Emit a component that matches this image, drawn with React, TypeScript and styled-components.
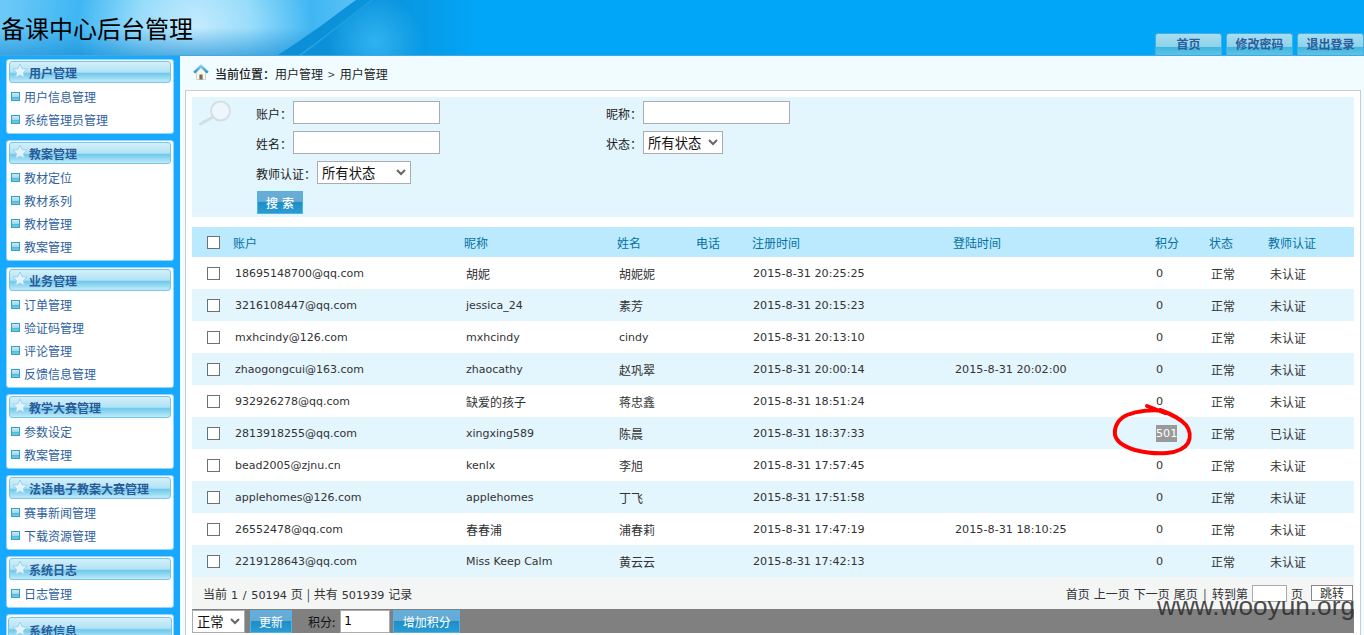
import React from "react";
import styled, { createGlobalStyle } from "styled-components";

const CJK = `"Noto Sans CJK SC", "Liberation Sans", sans-serif`;
const LATIN = `"DejaVu Sans", "Noto Sans CJK SC", sans-serif`;

const chevron =
  "data:image/svg+xml;utf8," +
  encodeURIComponent(
    '<svg xmlns="http://www.w3.org/2000/svg" width="10" height="7"><path d="M1 1l4 4 4-4" fill="none" stroke="#666" stroke-width="2"/></svg>'
  );

const Global = createGlobalStyle`
  html, body { margin: 0; padding: 0; height: 635px; overflow: hidden; background: #fff; }
  body { font-family: ${CJK}; font-size: 12px; color: #333; }
  * { box-sizing: border-box; }
`;

const Page = styled.div`
  position: relative;
  width: 1364px;
  height: 635px;
  overflow: hidden;
  display: flex;
  flex-direction: column;
`;

const Header = styled.header`
  position: relative;
  flex: 0 0 56px;
  height: 56px;
  background: #02a6f8;
  border-bottom: 1px solid #46a6de;
  display: flex;
  justify-content: space-between;
  align-items: flex-end;
  overflow: hidden;
`;

const HeaderArt = styled.svg`
  position: absolute;
  left: 0;
  top: 0;
`;

const Title = styled.h1`
  position: relative;
  margin: 0 0 9px 1px;
  font-size: 24px;
  line-height: 36px;
  font-weight: 400;
  color: #000;
  font-family: ${CJK};
`;

const Tabs = styled.nav`
  position: relative;
  display: flex;
  gap: 4px;
`;

const Tab = styled.a`
  width: 67px;
  height: 22px;
  display: flex;
  justify-content: center;
  align-items: center;
  padding-bottom: 3px;
  font-size: 12px;
  font-weight: 700;
  color: #2c5c9c;
  border-radius: 3px 3px 0 0;
  border: 1px solid #3fb0e6;
  border-bottom: 0;
  background: linear-gradient(#a9deef 0, #8ed2ea 60%, #3fb6de 62%, #5cc4e6 100%);
`;

const Body = styled.div`
  flex: 1;
  display: flex;
  min-height: 0;
`;

const Sidebar = styled.aside`
  flex: 0 0 180px;
  background: #17a8ff;
  padding: 3px 6px 0;
  display: flex;
  flex-direction: column;
  gap: 6px;
  overflow: hidden;
`;

const MenuTitle = styled.div`
  height: 22px;
  display: flex;
  align-items: center;
  gap: 1px;
  padding-left: 2px;
  border: 1px solid #78c6e8;
  border-radius: 3px;
  font-weight: 700;
  font-size: 12px;
  color: #2a5a98;
  background: linear-gradient(#d4effa 0, #b2e3f6 50%, #6ec9ec 58%, #a3def4 85%, #c4eaf8 100%);
  margin-bottom: 2px;
`;

const MenuGroup = styled.section`
  flex: 0 0 auto;
  background: #fff;
  border: 1px solid #8fd6fb;
  border-radius: 3px;
  padding: 1px 2px 2px;

  &:last-child {
    padding: 2px 1px 2px;
  }
  &:last-child ${MenuTitle} {
    height: 26px;
    padding-left: 3px;
    background: linear-gradient(#d4effa 0, #b2e3f6 42%, #6ec9ec 50%, #a3def4 72%, #c4eaf8 85%);
  }
`;

const Star = styled.svg`
  flex: 0 0 16px;
  margin-top: -3px;
`;

const MenuItem = styled.a`
  height: 23px;
  display: flex;
  align-items: center;
  gap: 4px;
  padding-left: 2px;
  font-size: 12px;
  color: #2f5f9e;
`;

const Bullet = styled.i`
  width: 9px;
  height: 9px;
  border: 1px solid #2ba3cd;
  background: linear-gradient(#cfe9f3 0, #a6d8e8 50%, #4fb6d8 55%, #7cc9e2 100%);
`;

const Main = styled.main`
  flex: 1;
  background: #f0fcff;
  padding: 0 3px 0 5px;
  min-width: 0;
`;

const Breadcrumb = styled.div`
  height: 34px;
  display: flex;
  align-items: center;
  padding: 1px 0 0 8px;
  color: #222;
  font-size: 12px;
`;

const HomeIcon = styled.svg`
  margin-right: 6px;
  margin-top: -3px;
`;

const Here = styled.span`
  font-weight: 500;
`;

const Gt = styled.span`
  margin: 0 5px;
  color: #444;
`;

const Panel = styled.div`
  background: #fff;
  border: 1px solid #ccc;
  border-bottom: 0;
  padding: 6px 6px 0;
  height: 545px;
`;

const SearchBox = styled.form`
  position: relative;
  height: 120px;
  background: #e3f5fd;
  padding: 4px 0 0 64px;
  display: flex;
  flex-direction: column;
  gap: 7px;
`;

const Magnifier = styled.svg`
  position: absolute;
  left: 6px;
  top: 3px;
`;

const SearchRow = styled.div`
  display: grid;
  grid-template-columns: 350px 1fr;
  height: 23px;
`;

const Field = styled.label`
  display: flex;
  align-items: center;
  gap: 1px;
  color: #222;
  font-size: 12px;
`;

const FieldName = styled.span`
  padding-top: 2px;
`;

const TextInput = styled.input<{ $w: number }>`
  width: ${(p) => p.$w}px;
  height: 23px;
  border: 1px solid #a9adb2;
  background: #fff;
  padding: 0 3px;
  font-size: 12px;
  font-family: ${LATIN};
  outline: 0;
`;

const Select = styled.select<{ $w: number }>`
  width: ${(p) => p.$w}px;
  height: 23px;
  padding: 0 0 0 4px;
  border: 1px solid #a9adb2;
  border-radius: 0;
  appearance: none;
  background: #fff url("${chevron}") no-repeat right 4px center;
  font-size: 13.33px;
  font-family: ${CJK};
  color: #111;
`;

const BlueButton = styled.button<{ $w: number }>`
  width: ${(p) => p.$w}px;
  height: 23px;
  padding: 0;
  border: 1px solid #4cb4ea;
  color: #fff;
  font-size: 12px;
  font-family: ${CJK};
  background: linear-gradient(#69add6 0, #65abd5 45%, #1e8fc6 50%, #2b9bd0 100%);
`;

const SearchButton = styled(BlueButton)`
  margin-left: 1px;
  letter-spacing: 4px;
  padding-left: 4px;
  font-weight: 500;
`;

const Table = styled.table`
  width: 1162px;
  margin-top: 10px;
  table-layout: fixed;
  border-collapse: collapse;
`;

const HeadRow = styled.tr`
  height: 30px;
  background: #bbeaff;
`;

const Th = styled.th`
  padding: 0;
  text-align: left;
  font-weight: 400;
  font-size: 12px;
  color: #06709f;
`;

const Row = styled.tr<{ $alt: boolean }>`
  height: 32px;
  background: ${(p) => (p.$alt ? "#e3f5fd" : "#fff")};
`;

const Td = styled.td<{ $latin?: number; $wide?: boolean }>`
  padding: 1px 0 0 ${(p) => (p.$wide ? "2px" : "1px")};
  font-size: ${(p) => p.$latin ?? 12}px;
  font-family: ${(p) => (p.$latin ? LATIN : CJK)};
  color: #333;
  white-space: nowrap;
`;

const CheckCell = styled.td`
  padding: 0 0 0 15px;
`;

const HeadCheckCell = styled.th`
  padding: 0 0 0 15px;
`;

const Check = styled.i`
  display: block;
  width: 13px;
  height: 13px;
  border: 1px solid #707070;
  background: #fff;
`;

const Marked = styled.span`
  background: #999;
  color: #fff;
  padding: 2px 0;
`;

const Pager = styled.div`
  height: 32px;
  width: 1162px;
  background: #f4f5f5;
  display: flex;
  justify-content: space-between;
  align-items: center;
  padding: 0 1px 0 11px;
  color: #333;
`;

const PagerLeft = styled.span`
  word-spacing: 1.2px;
`;

const PagerRight = styled.div`
  display: flex;
  align-items: center;
  gap: 4px;
`;

const PagerBar = styled.span`
  margin: 0 1.5px;
`;

const Num = styled.span`
  font-family: ${LATIN};
  font-size: 11.2px;
`;

const JumpInput = styled.input`
  width: 35px;
  height: 17px;
  border: 1px solid #aaa;
  background: #fff;
`;

const JumpButton = styled.button`
  width: 42px;
  height: 16px;
  margin-left: 4px;
  padding: 0;
  border: 1px solid #888;
  background: #fff;
  font-size: 12px;
  line-height: 12px;
  font-family: ${CJK};
  color: #333;
`;

const ActionBar = styled.div`
  width: 1162px;
  height: 24px;
  background: #808080;
  display: flex;
  align-items: center;
  color: #111;
`;

const BarLabel = styled.span`
  margin: 0 5px 0 16px;
`;

const BarGap = styled.span<{ $w: number }>`
  width: ${(p) => p.$w}px;
`;

const Watermark = styled.div`
  position: absolute;
  left: 1157px;
  top: 591px;
  font-family: "Liberation Sans", sans-serif;
  font-size: 26.2px;
  line-height: 30px;
  color: rgba(45, 45, 45, 0.85);
  white-space: nowrap;
`;

const RedMark = styled.svg`
  position: absolute;
  left: 1105px;
  top: 400px;
`;

const menus: [string, string[]][] = [
  ["用户管理", ["用户信息管理", "系统管理员管理"]],
  ["教案管理", ["教材定位", "教材系列", "教材管理", "教案管理"]],
  ["业务管理", ["订单管理", "验证码管理", "评论管理", "反馈信息管理"]],
  ["教学大赛管理", ["参数设定", "教案管理"]],
  ["法语电子教案大赛管理", ["赛事新闻管理", "下载资源管理"]],
  ["系统日志", ["日志管理"]],
  ["系统信息", []],
];

const cols = [41, 231, 153, 79, 56, 201, 202, 54, 59, 86];
const heads = ["账户", "昵称", "姓名", "电话", "注册时间", "登陆时间", "积分", "状态", "教师认证"];

type R = [string, string, string, string, string, string, string];
const rows: R[] = [
  ["18695148700@qq.com", "胡妮", "胡妮妮", "2015-8-31 20:25:25", "", "0", "未认证"],
  ["3216108447@qq.com", "jessica_24", "素芳", "2015-8-31 20:15:23", "", "0", "未认证"],
  ["mxhcindy@126.com", "mxhcindy", "cindy", "2015-8-31 20:13:10", "", "0", "未认证"],
  ["zhaogongcui@163.com", "zhaocathy", "赵巩翠", "2015-8-31 20:00:14", "2015-8-31 20:02:00", "0", "未认证"],
  ["932926278@qq.com", "缺爱的孩子", "蒋忠鑫", "2015-8-31 18:51:24", "", "0", "未认证"],
  ["2813918255@qq.com", "xingxing589", "陈晨", "2015-8-31 18:37:33", "", "501", "已认证"],
  ["bead2005@zjnu.cn", "kenlx", "李旭", "2015-8-31 17:57:45", "", "0", "未认证"],
  ["applehomes@126.com", "applehomes", "丁飞", "2015-8-31 17:51:58", "", "0", "未认证"],
  ["26552478@qq.com", "春春浦", "浦春莉", "2015-8-31 17:47:19", "2015-8-31 18:10:25", "0", "未认证"],
  ["2219128643@qq.com", "Miss Keep Calm", "黄云云", "2015-8-31 17:42:13", "", "0", "未认证"],
];

const latinSize = (s: string, size: number) => (/^[\x00-\x7f]*$/.test(s) ? size : undefined);

const StarIcon = () => (
  <Star width="16" height="16" viewBox="0 0 16 16">
    <path
      d="M8 1l2.1 4.6 5 .6-3.7 3.4 1 4.9L8 12.1 3.6 14.5l1-4.9L.9 6.2l5-.6z"
      fill="#e2f4fb"
      stroke="#9fd3ee"
      strokeWidth="1"
      strokeLinejoin="round"
    />
  </Star>
);

export default function App() {
  return (
    <Page>
      <Global />
      <Header>
        <HeaderArt width="480" height="55" viewBox="0 0 480 55">
          <defs>
            <radialGradient id="glow" gradientUnits="userSpaceOnUse" cx="195" cy="28" r="190">
              <stop offset="0" stopColor="#c6ebfe" />
              <stop offset="0.3" stopColor="#98dcfb" />
              <stop offset="0.62" stopColor="#3fb6f3" />
              <stop offset="1" stopColor="#6cc8f8" />
            </radialGradient>
            <linearGradient id="fade" x1="0" y1="0" x2="0" y2="1">
              <stop offset="0.5" stopColor="#0f86cf" stopOpacity="0" />
              <stop offset="1" stopColor="#0f86cf" stopOpacity="0.55" />
            </linearGradient>
            <linearGradient id="sweep" gradientUnits="userSpaceOnUse" x1="300" y1="0" x2="480" y2="0">
              <stop offset="0" stopColor="#0c8fd6" />
              <stop offset="0.5" stopColor="#0a95dd" />
              <stop offset="1" stopColor="#02a6f8" />
            </linearGradient>
            <radialGradient id="blob" gradientUnits="userSpaceOnUse" cx="375" cy="42" r="48">
              <stop offset="0" stopColor="#33b4f2" stopOpacity="0.95" />
              <stop offset="1" stopColor="#33b4f2" stopOpacity="0" />
            </radialGradient>
            <linearGradient id="hem" gradientUnits="userSpaceOnUse" x1="300" y1="0" x2="440" y2="0">
              <stop offset="0" stopColor="#2eaeea" stopOpacity="0.8" />
              <stop offset="1" stopColor="#2eaeea" stopOpacity="0" />
            </linearGradient>
          </defs>
          <path d="M0 0H360C335 15 310 35 278 55H0z" fill="url(#glow)" />
          <path d="M0 0H360C335 15 310 35 278 55H0z" fill="url(#fade)" />
          <path d="M278 55C310 35 335 15 356 0H480V55z" fill="url(#sweep)" />
          <path d="M300 55C325 38 350 18 372 0H440V55z" fill="url(#blob)" />
          <path d="M300 55C325 38 350 16 372 0" fill="none" stroke="url(#hem)" strokeWidth="1.5" />
        </HeaderArt>
        <Title>备课中心后台管理</Title>
        <Tabs>
          <Tab>首页</Tab>
          <Tab>修改密码</Tab>
          <Tab>退出登录</Tab>
        </Tabs>
      </Header>
      <Body>
        <Sidebar>
          {menus.map(([title, items]) => (
            <MenuGroup key={title}>
              <MenuTitle>
                <StarIcon />
                {title}
              </MenuTitle>
              {items.map((item) => (
                <MenuItem key={item}>
                  <Bullet />
                  {item}
                </MenuItem>
              ))}
            </MenuGroup>
          ))}
        </Sidebar>
        <Main>
          <Breadcrumb>
            <HomeIcon width="16" height="16" viewBox="0 0 16 16">
              <defs>
                <linearGradient id="roof" x1="0" y1="0" x2="0" y2="1">
                  <stop offset="0" stopColor="#7fd0f2" />
                  <stop offset="1" stopColor="#2b8fc8" />
                </linearGradient>
              </defs>
              <path d="M3.5 8v7.5h9V8L8 3.5z" fill="#f6f6f0" stroke="#b9b9a8" strokeWidth=".6" />
              <path d="M6.4 15.5v-5h3.2v5z" fill="#7d6a4c" />
              <path d="M1.2 8.6L8 1.8l6.8 6.8" fill="none" stroke="url(#roof)" strokeWidth="2.6" strokeLinejoin="round" />
            </HomeIcon>
            <Here>当前位置：</Here>
            用户管理
            <Gt>&gt;</Gt>
            用户管理
          </Breadcrumb>
          <Panel>
            <SearchBox>
              <Magnifier width="34" height="26" viewBox="0 0 34 26">
                <circle cx="22.5" cy="11" r="9.5" fill="#edf6fa" stroke="#d3dfe6" strokeWidth="2" />
                <path d="M15 17L2.5 24" stroke="#d3dde3" strokeWidth="3" strokeLinecap="round" />
              </Magnifier>
              <SearchRow>
                <Field>
                  <FieldName>账户：</FieldName>
                  <TextInput $w={147} />
                </Field>
                <Field>
                  <FieldName>昵称：</FieldName>
                  <TextInput $w={147} />
                </Field>
              </SearchRow>
              <SearchRow>
                <Field>
                  <FieldName>姓名：</FieldName>
                  <TextInput $w={147} />
                </Field>
                <Field>
                  <FieldName>状态：</FieldName>
                  <Select $w={80}>
                    <option>所有状态</option>
                  </Select>
                </Field>
              </SearchRow>
              <SearchRow>
                <Field>
                  <FieldName>教师认证：</FieldName>
                  <Select $w={94}>
                    <option>所有状态</option>
                  </Select>
                </Field>
              </SearchRow>
              <SearchRow>
                <Field>
                  <SearchButton type="button" $w={46}>搜索</SearchButton>
                </Field>
              </SearchRow>
            </SearchBox>
            <Table>
              <colgroup>
                {cols.map((w, i) => (
                  <col key={i} width={w} />
                ))}
              </colgroup>
              <thead>
                <HeadRow>
                  <HeadCheckCell>
                    <Check />
                  </HeadCheckCell>
                  {heads.map((h) => (
                    <Th key={h}>{h}</Th>
                  ))}
                </HeadRow>
              </thead>
              <tbody>
                {rows.map((r, i) => (
                  <Row key={r[0]} $alt={i % 2 === 1}>
                    <CheckCell>
                      <Check />
                    </CheckCell>
                    <Td $latin={11} $wide>{r[0]}</Td>
                    <Td $latin={latinSize(r[1], 11)} $wide>{r[1]}</Td>
                    <Td $latin={latinSize(r[2], 11)} $wide>{r[2]}</Td>
                    <Td />
                    <Td $latin={11.2}>{r[3]}</Td>
                    <Td $latin={11.2} $wide>{r[4]}</Td>
                    <Td $latin={11.2}>{r[5] === "501" ? <Marked>{r[5]}</Marked> : r[5]}</Td>
                    <Td $wide>正常</Td>
                    <Td $wide>{r[6]}</Td>
                  </Row>
                ))}
              </tbody>
            </Table>
            <Pager>
              <PagerLeft>
                当前 <Num>1 / 50194</Num> 页 | 共有 <Num>501939</Num> 记录
              </PagerLeft>
              <PagerRight>
                <span>首页</span>
                <span>上一页</span>
                <span>下一页</span>
                <span>尾页</span>
                <PagerBar>|</PagerBar>
                <span>转到第</span>
                <JumpInput />
                <span>页</span>
                <JumpButton type="button">跳转</JumpButton>
              </PagerRight>
            </Pager>
            <ActionBar>
              <Select $w={53}>
                <option>正常</option>
              </Select>
              <BarGap $w={5} />
              <BlueButton type="button" $w={42}>更新</BlueButton>
              <BarLabel>积分:</BarLabel>
              <TextInput $w={50} defaultValue="1" />
              <BarGap $w={3} />
              <BlueButton type="button" $w={67}>增加积分</BlueButton>
            </ActionBar>
          </Panel>
        </Main>
      </Body>
      <RedMark width="100" height="65" viewBox="0 0 100 65">
        <path
          d="M42 6L60 13M58 11C48 9 32 11 22 15C13 19 9 27 10 35C12 43 20 47 30 50C42 53 52 54 62 53C72 52 80 48 83 43C86 37 85 30 81 25C75 18 66 14 55 10"
          fill="none"
          stroke="#f00"
          strokeWidth="4"
          strokeLinecap="round"
          strokeLinejoin="round"
        />
      </RedMark>
      <Watermark>www.wooyun.org</Watermark>
    </Page>
  );
}
